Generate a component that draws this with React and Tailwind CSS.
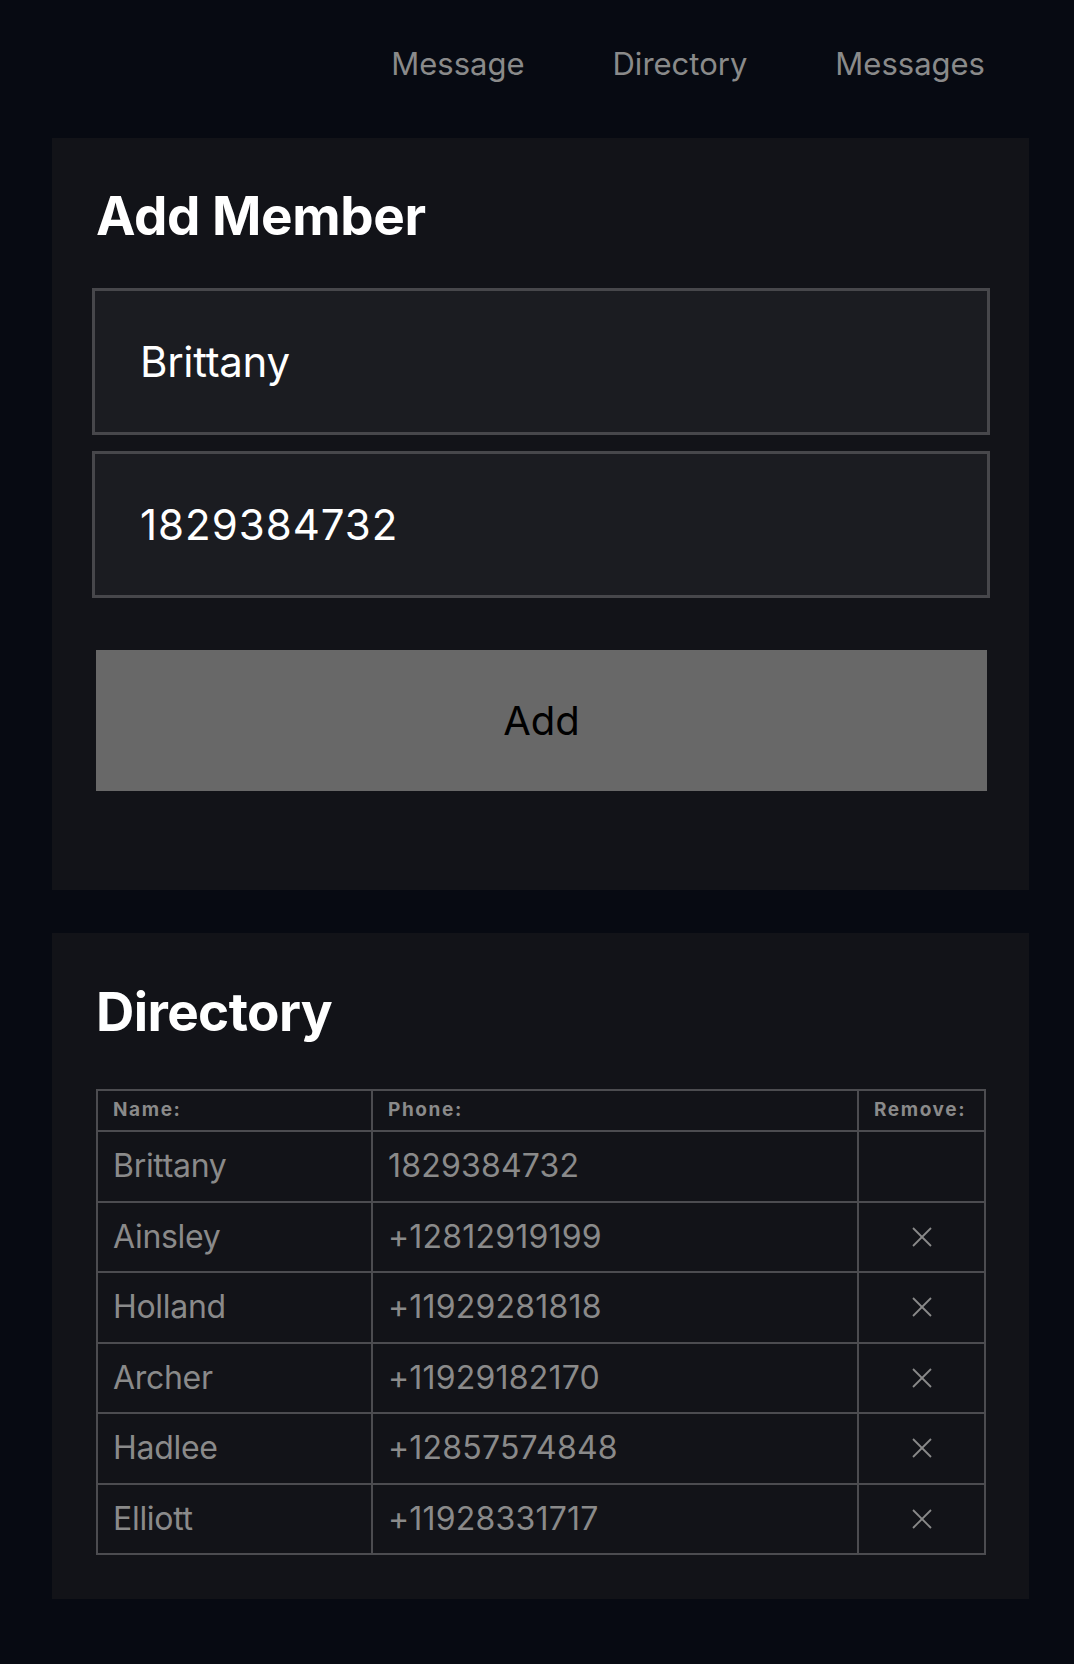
import React, { useState } from 'react'

const members = [
  { name: 'Brittany', phone: '1829384732', removable: false },
  { name: 'Ainsley', phone: '+12812919199', removable: true },
  { name: 'Holland', phone: '+11929281818', removable: true },
  { name: 'Archer', phone: '+11929182170', removable: true },
  { name: 'Hadlee', phone: '+12857574848', removable: true },
  { name: 'Elliott', phone: '+11928331717', removable: true }
]

const RemoveIcon = () => (
  <svg width='20' height='20' viewBox='0 0 20 20' className='mx-auto block'>
    <line x1='1' y1='1' x2='19' y2='19' stroke='#8a8a8a' strokeWidth='1.8' />
    <line x1='19' y1='1' x2='1' y2='19' stroke='#8a8a8a' strokeWidth='1.8' />
  </svg>
)

const Nav = () => (
  <nav className='flex h-[129px] items-center justify-end gap-[88px] pr-[89px] text-[31px] text-[#8a8a8a]'>
    <a href='#'>Message</a>
    <a href='#'>Directory</a>
    <a href='#'>Messages</a>
  </nav>
)

const AddMember = () => {
  const [name, setName] = useState('Brittany')
  const [phone, setPhone] = useState('1829384732')
  return (
    <section className='ml-[52px] mt-[9px] w-[977px] bg-[#121318] px-[40px] pb-[99px] pt-[52px]'>
      <h1 className='pl-[4px] text-[53px] font-bold leading-none tracking-[-0.4px] text-white'>Add Member</h1>
      <div className='mt-[45px] flex flex-col gap-[16px]'>
        <input
          className='h-[147px] w-[898px] border-[3px] border-[#47474b] bg-[#1b1c21] px-[45px] text-[42px] tracking-[-0.3px] text-white outline-none'
          value={name}
          onChange={e => setName(e.target.value)}
        />
        <input
          autoFocus
          className='h-[147px] w-[898px] border-[3px] border-[#47474b] bg-[#1b1c21] px-[45px] text-[42px] tracking-[1px] text-white caret-white outline-none'
          value={phone}
          onChange={e => setPhone(e.target.value)}
        />
      </div>
      <button className='ml-[4px] mt-[52px] block h-[141px] w-[891px] bg-[#686868] text-[40px] text-black'>
        Add
      </button>
    </section>
  )
}

const Directory = () => (
  <section className='ml-[52px] mt-[43px] w-[977px] bg-[#121318] px-[44px] pb-[44px] pt-[53px]'>
    <h1 className='text-[53px] font-bold leading-none tracking-[-0.6px] text-white'>Directory</h1>
    <table className='mt-[50px] w-[890px] table-fixed border-collapse border-2 border-[#4c4c50] text-[#8a8a8a]'>
      <thead>
        <tr className='h-[41px] text-left text-[19px] font-bold tracking-[1.6px]'>
          <th className='w-[275px] border-2 border-[#4c4c50] px-[15px]'>Name:</th>
          <th className='border-2 border-[#4c4c50] px-[15px]'>Phone:</th>
          <th className='w-[127px] border-2 border-[#4c4c50] px-[15px]'>Remove:</th>
        </tr>
      </thead>
      <tbody>
        {members.map(m => (
          <tr key={m.name} className='h-[70.5px] text-[32px]'>
            <td className='border-2 border-[#4c4c50] px-[15px] tracking-[-0.3px]'>{m.name}</td>
            <td className='border-2 border-[#4c4c50] px-[15px] tracking-[0.2px]'>{m.phone}</td>
            <td className='border-2 border-[#4c4c50] px-[15px]'>
              {m.removable ? <RemoveIcon /> : null}
            </td>
          </tr>
        ))}
      </tbody>
    </table>
  </section>
)

export default function App () {
  return (
    <div className="min-h-[1664px] bg-[#070a12] font-['Inter',sans-serif]">
      <Nav />
      <AddMember />
      <Directory />
    </div>
  )
}
